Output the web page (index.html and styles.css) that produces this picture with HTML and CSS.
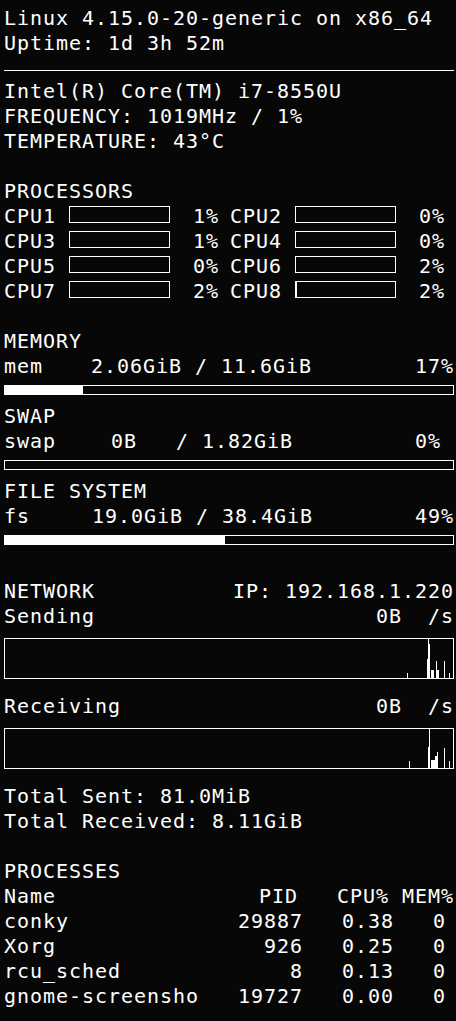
FILE: index.html
```html
<!DOCTYPE html>
<html lang="en">
<head>
<meta charset="utf-8">
<title>conky</title>
<link rel="stylesheet" href="styles.css">
</head>
<body>
<div class="conky">
  <div class="line">Linux 4.15.0-20-generic on x86_64</div>
  <div class="line">Uptime: 1d 3h 52m</div>
  <hr class="rule">
  <div class="line">Intel(R) Core(TM) i7-8550U</div>
  <div class="line">FREQUENCY: 1019MHz / 1%</div>
  <div class="line">TEMPERATURE: 43°C</div>
  <div class="blank"></div>

  <div class="line">PROCESSORS</div>
  <div class="cpu-grid">
    <div class="cpu"><span class="cpu-label">CPU1</span><span class="cpu-bar"></span><span class="cpu-pct">1%</span></div>
    <div class="cpu"><span class="cpu-label">CPU2</span><span class="cpu-bar"></span><span class="cpu-pct">0%</span></div>
    <div class="cpu"><span class="cpu-label">CPU3</span><span class="cpu-bar"></span><span class="cpu-pct">1%</span></div>
    <div class="cpu"><span class="cpu-label">CPU4</span><span class="cpu-bar"></span><span class="cpu-pct">0%</span></div>
    <div class="cpu"><span class="cpu-label">CPU5</span><span class="cpu-bar"></span><span class="cpu-pct">0%</span></div>
    <div class="cpu"><span class="cpu-label">CPU6</span><span class="cpu-bar"></span><span class="cpu-pct">2%</span></div>
    <div class="cpu"><span class="cpu-label">CPU7</span><span class="cpu-bar"></span><span class="cpu-pct">2%</span></div>
    <div class="cpu"><span class="cpu-label">CPU8</span><span class="cpu-bar"><span class="cpu-fill" style="width:1%"></span></span><span class="cpu-pct">2%</span></div>
  </div>
  <div class="blank"></div>

  <div class="line">MEMORY</div>
  <div class="usage"><span class="usage-label">mem</span><span class="usage-val">2.06GiB / 11.6GiB</span><span class="usage-pct">17%</span></div>
  <div class="meter"><div class="meter-fill" style="width:17.5%"></div></div>

  <div class="line">SWAP</div>
  <div class="usage"><span class="usage-label">swap</span><span class="usage-val usage-val-swap">0B   / 1.82GiB</span><span class="usage-pct">0% </span></div>
  <div class="meter"><div class="meter-fill" style="width:0%"></div></div>

  <div class="line">FILE SYSTEM</div>
  <div class="usage"><span class="usage-label">fs</span><span class="usage-val usage-val-fs">19.0GiB / 38.4GiB</span><span class="usage-pct">49%</span></div>
  <div class="meter"><div class="meter-fill" style="width:49.2%"></div></div>
  <div class="blank"></div>

  <div class="split"><span>NETWORK</span><span>IP: 192.168.1.220</span></div>
  <div class="split"><span>Sending</span><span class="pre">0B  /s</span></div>
  <svg class="graph" width="450" height="41" viewBox="0 0 450 41">
    <rect x="0.5" y="0.5" width="449" height="40" fill="none" stroke="#fff" stroke-width="1"/>
    <g fill="#fff">
      <rect x="403" y="35" width="1" height="5"/>
      <rect x="423" y="21" width="1" height="19"/>
      <rect x="424" y="1" width="1" height="39"/>
      <rect x="425" y="6" width="1" height="34"/>
      <rect x="427" y="32" width="3" height="8"/>
      <rect x="432" y="23" width="1" height="17"/>
      <rect x="433" y="32" width="2" height="8"/>
      <rect x="440" y="23" width="1" height="17"/>
      <rect x="445" y="35" width="1" height="5"/>
    </g>
  </svg>

  <div class="split"><span>Receiving</span><span class="pre">0B  /s</span></div>
  <svg class="graph" width="450" height="41" viewBox="0 0 450 41">
    <rect x="0.5" y="0.5" width="449" height="40" fill="none" stroke="#fff" stroke-width="1"/>
    <g fill="#fff">
      <rect x="405" y="33" width="1" height="7"/>
      <rect x="424" y="19" width="1" height="21"/>
      <rect x="425" y="1" width="1" height="39"/>
      <rect x="427" y="32" width="4" height="8"/>
      <rect x="431" y="28" width="2" height="12"/>
      <rect x="433" y="24" width="1" height="16"/>
      <rect x="440" y="20" width="1" height="20"/>
      <rect x="445" y="33" width="1" height="7"/>
    </g>
  </svg>

  <div class="line">Total Sent: 81.0MiB</div>
  <div class="line">Total Received: 8.11GiB</div>
  <div class="blank"></div>

  <div class="line">PROCESSES</div>
  <div class="split"><span>Name</span><span class="pre">PID   CPU% MEM%</span></div>
  <div class="line">conky             29887   0.38   0</div>
  <div class="line">Xorg                926   0.25   0</div>
  <div class="line">rcu_sched             8   0.13   0</div>
  <div class="line">gnome-screensho   19727   0.00   0</div>
</div>
</body>
</html>
```

FILE: styles.css
```css
html, body {
  margin: 0;
  padding: 0;
  background: #070707;
}

.conky {
  width: 450px;
  padding: 6px 2px 0 4px;
  font-family: "DejaVu Sans Mono", monospace;
  font-size: 20px;
  letter-spacing: 0.96px;
  line-height: 25px;
  color: #fff;
}

.line {
  height: 25px;
  white-space: pre;
}

.blank {
  height: 25px;
}

.pre {
  white-space: pre;
}

.rule {
  height: 0;
  border: 0;
  border-top: 1px solid #fff;
  margin: 14px 0 8px;
}

/* processors */
.cpu-grid {
  display: grid;
  grid-template-columns: 215px 215px;
  column-gap: 11px;
}

.cpu {
  display: flex;
  height: 25px;
}

.cpu-label {
  width: 65px;
  flex: none;
}

.cpu-bar {
  display: flex;
  flex: none;
  width: 101px;
  height: 17px;
  margin-top: 2px;
  box-sizing: border-box;
  border: 1px solid #fff;
}

.cpu-fill {
  display: block;
  height: 100%;
  background: #fff;
}

.cpu-pct {
  flex: 1;
  text-align: right;
}

/* memory / swap / fs */
.usage {
  display: flex;
  height: 25px;
}

.usage-label {
  width: 87px;
  flex: none;
}

.usage-val {
  flex: 1;
  white-space: pre;
}

.usage-val-swap {
  padding-left: 20px;
}

.usage-val-fs {
  padding-left: 1px;
}

.usage-pct {
  white-space: pre;
}

.meter {
  height: 10px;
  box-sizing: border-box;
  border: 1px solid #fff;
  margin: 6px 0 9px;
}

.meter-fill {
  height: 100%;
  background: #fff;
}

/* network */
.split {
  display: flex;
  justify-content: space-between;
  height: 25px;
}

.graph {
  display: block;
  margin: 9px 0 15px;
}
```
